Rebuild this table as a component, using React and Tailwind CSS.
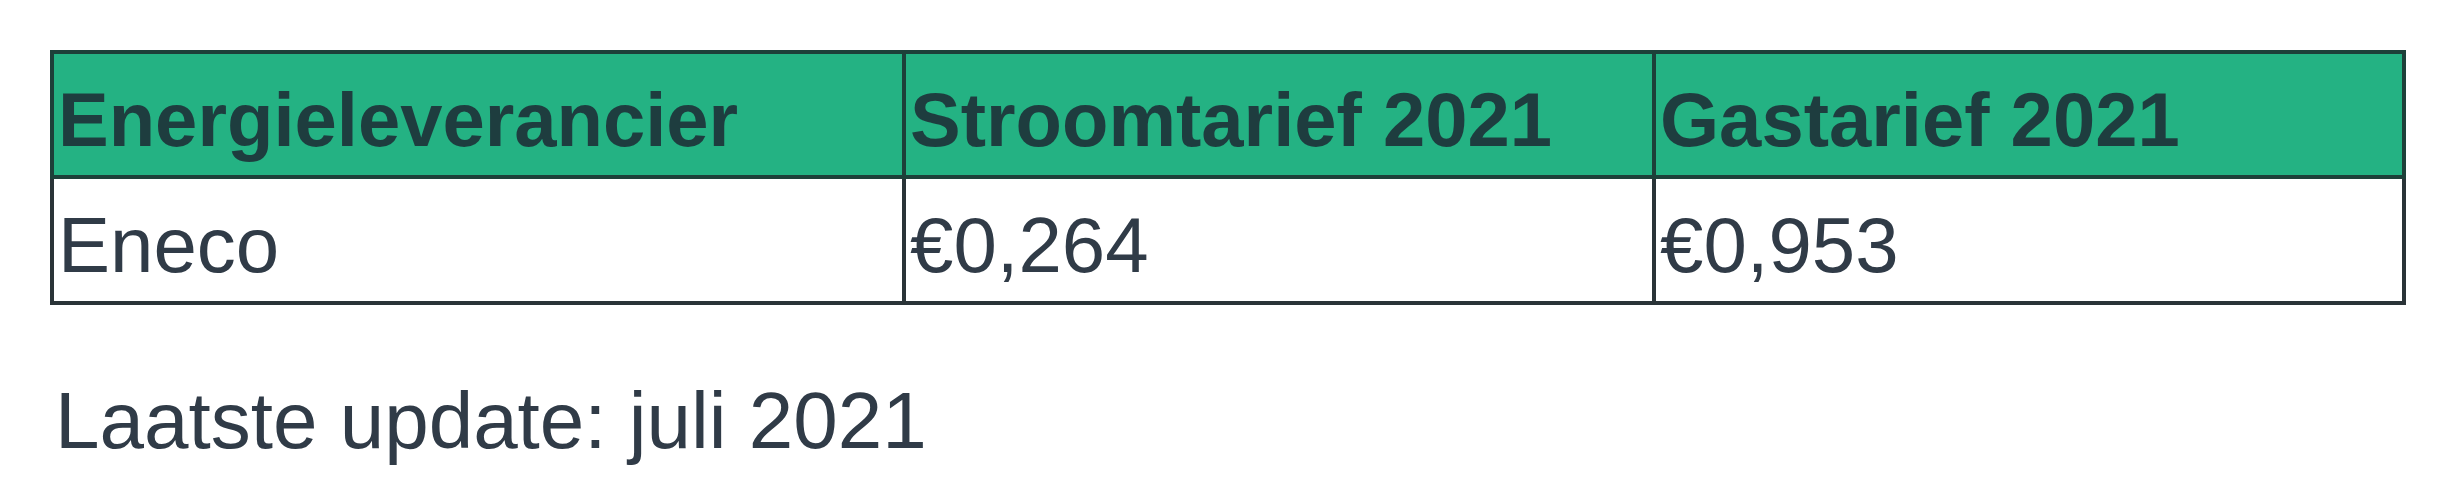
export default function App() {
  const rows = [['Eneco', '€0,264', '€0,953']];
  return (
    <div className="w-[2450px] h-[490px] bg-white pt-[50px] pl-[50px] font-['Liberation_Sans',Arial,sans-serif] text-[#303b47]">
      <table className="border-collapse w-[2352px] table-fixed border-[4px] border-[#2a3438]">
        <colgroup>
          <col className="w-[852px]" />
          <col className="w-[750px]" />
          <col className="w-[750px]" />
        </colgroup>
        <thead>
          <tr className="bg-[#24b283] h-[125px]">
            {['Energieleverancier', 'Stroomtarief 2021', 'Gastarief 2021'].map((h) => (
              <th
                key={h}
                className="border-[4px] border-[#1d4039] text-left align-middle pl-[4px] pt-[10px] text-[76px] font-bold leading-none text-[#1e3d3f]"
              >
                {h}
              </th>
            ))}
          </tr>
        </thead>
        <tbody>
          {rows.map((r) => (
            <tr key={r[0]} className="h-[126px] bg-white">
              {r.map((c, i) => (
                <td
                  key={i}
                  className="border-[4px] border-[#2a3438] text-left align-middle pl-[4px] pt-[10px] text-[78px] leading-none"
                >
                  {c}
                </td>
              ))}
            </tr>
          ))}
        </tbody>
      </table>
      <p className="mt-[76px] text-[80px] leading-none pl-[5px]">Laatste update: juli 2021</p>
    </div>
  );
}
